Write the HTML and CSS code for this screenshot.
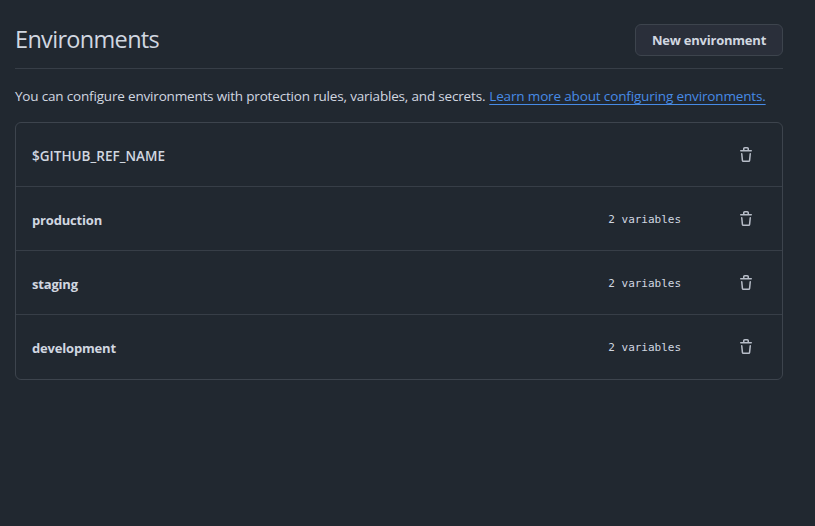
FILE: index.html
```html
<!DOCTYPE html>
<html lang="en">
<head>
<meta charset="utf-8">
<title>Environments</title>
<link rel="stylesheet" href="styles.css">
</head>
<body>
<svg width="0" height="0" class="defs"><symbol id="trash" viewBox="0 0 16 16"><path d="M11 1.75V3h2.25a.75.75 0 0 1 0 1.5H2.75a.75.75 0 0 1 0-1.5H5V1.75C5 .784 5.784 0 6.75 0h2.5C10.216 0 11 .784 11 1.75ZM4.496 6.675l.66 6.6a.25.25 0 0 0 .249.225h5.19a.25.25 0 0 0 .249-.225l.66-6.6a.75.75 0 0 1 1.492.149l-.66 6.6A1.748 1.748 0 0 1 10.595 15h-5.19a1.75 1.75 0 0 1-1.741-1.575l-.66-6.6a.75.75 0 1 1 1.492-.15ZM6.5 1.75V3h3V1.75a.25.25 0 0 0-.25-.25h-2.5a.25.25 0 0 0-.25.25Z"/></symbol></svg>
<main class="page">
<header class="header"><h1><span class="title">Environments</span></h1><button class="new"><span class="new-text">New environment</span></button></header>
<p class="intro"><span class="copy">You can configure environments with protection rules, variables, and secrets.</span><a href="#" class="link">Learn more about configuring environments.</a></p>
<ul class="list">
<li class="row"><span class="name n1">$GITHUB_REF_NAME</span><svg class="icon"><use href="#trash"/></svg></li>
<li class="row"><span class="name">production</span><code class="count">2 variables</code><svg class="icon"><use href="#trash"/></svg></li>
<li class="row"><span class="name">staging</span><code class="count">2 variables</code><svg class="icon"><use href="#trash"/></svg></li>
<li class="row"><span class="name">development</span><code class="count">2 variables</code><svg class="icon"><use href="#trash"/></svg></li>
</ul>
</main>
</body>
</html>
```
FILE: styles.css
```css
* { box-sizing: border-box; }
body { margin: 0; background: #212830; color: #d1d7e0; font: 13.5px/20px "Open Sans", "Noto Sans", sans-serif; }
.defs { position: absolute; }
.page { width: 768px; margin-left: 15px; padding-top: 24px; }
.header { display: flex; justify-content: space-between; height: 45px; border-bottom: 1px solid #373e47; }
h1 { margin: 0; font-size: 23.5px; line-height: 31px; font-weight: 400; letter-spacing: -0.68px; }
.new { width: 148px; height: 32px; padding: 0; border: 1px solid #3d444d; border-radius: 6px; background: #2a2f3a; color: #d1d7e0; font: 700 13px/20px "Open Sans", sans-serif; letter-spacing: -0.22px; white-space: nowrap; }
.intro { display: flex; gap: 4px; margin: 17px 0 16px; height: 20px; white-space: nowrap; letter-spacing: -0.18px; }
.link { color: #478be6; letter-spacing: -0.15px; text-decoration: underline; text-decoration-thickness: 1px; text-underline-offset: 3px; }
.list { list-style: none; margin: 0; padding: 0; border: 1px solid #3d444d; border-radius: 6px; }
.row { display: flex; align-items: center; height: 64px; padding: 0 28px 0 16px; border-bottom: 1px solid #373e47; }
.row:last-child { border-bottom-color: transparent; }
.name { padding-top: 3px; font-size: 13px; font-weight: 700; letter-spacing: -0.18px; }
.count { margin-left: auto; margin-right: 57px; padding-top: 2px; font: 11px/18px "DejaVu Sans Mono", monospace; letter-spacing: -0.02px; }
.icon { width: 16px; height: 16px; fill: #b7bdc8; }
.n1 { font-size: 13.5px; font-weight: 650; letter-spacing: 0.03px; }
.n1 + .icon { margin-left: auto; }
```
